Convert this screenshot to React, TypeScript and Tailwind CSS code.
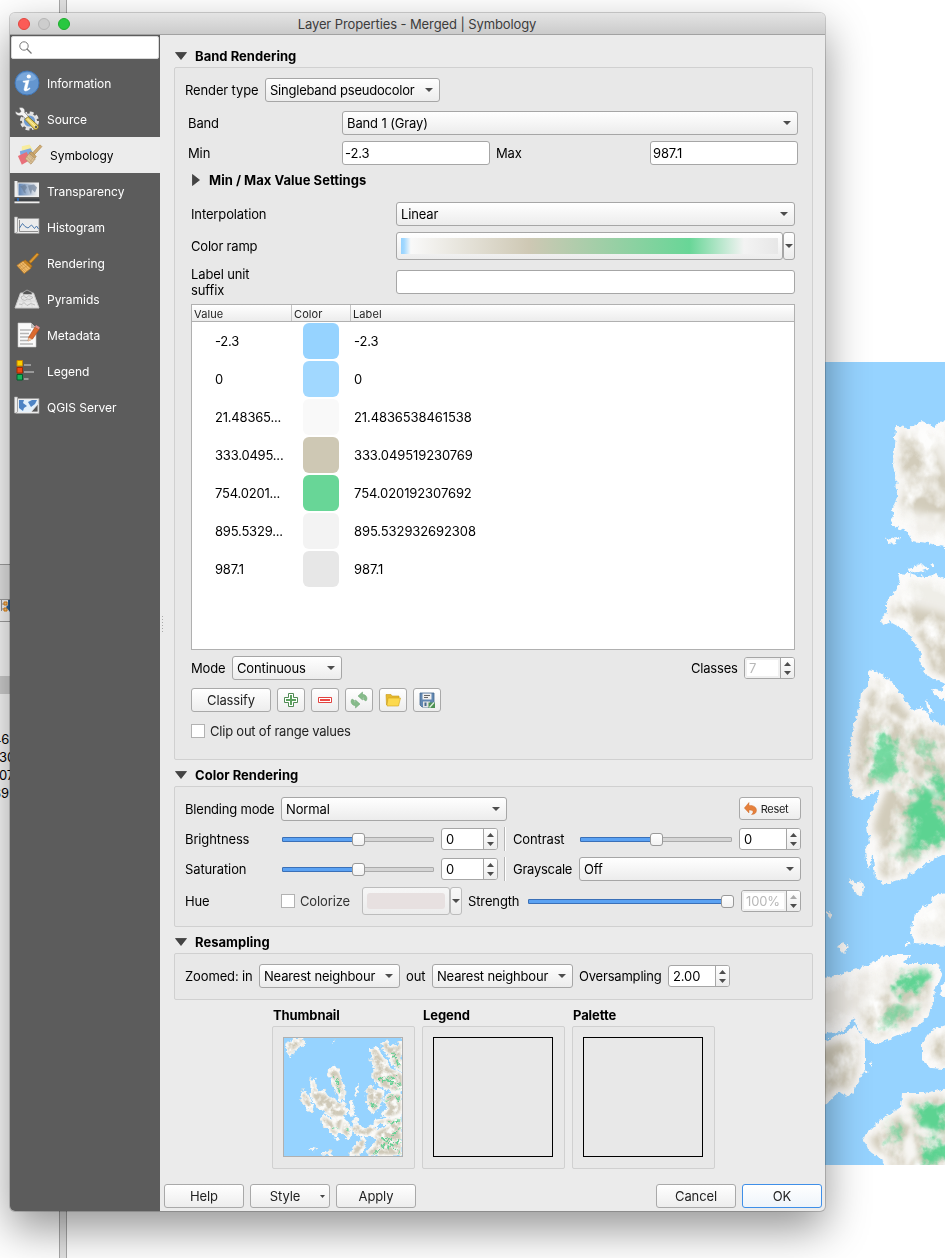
import React from "react";

type Kids = { children?: React.ReactNode };

/* ---------- basic widgets ---------- */

const Down = ({ c = "#4d4d4d" }: { c?: string }) => (
  <svg width="8" height="4" viewBox="0 0 8 4" className="shrink-0"><path d="M0 0h8L4 4z" fill={c} /></svg>
);

const Combo = ({ className = "", children }: Kids & { className?: string }) => (
  <div className={"flex h-6 shrink-0 items-center justify-between rounded-[3px] border border-[#a6a6a6] bg-linear-to-b from-white to-[#ececec] pl-1 pr-[6px] " + className}>
    <span>{children}</span>
    <Down />
  </div>
);

const Field = ({ className = "", children }: Kids & { className?: string }) => (
  <div className={"flex h-6 shrink-0 items-center rounded-[3px] border border-[#a6a6a6] bg-white pl-[2px] " + className}>{children}</div>
);

const Push = ({ className = "", children }: Kids & { className?: string }) => (
  <button className={"flex h-6 shrink-0 items-center justify-center rounded-[3px] border border-[#a9a9a9] bg-linear-to-b from-white to-[#ededed] text-[#222] " + className}>{children}</button>
);

const Spin = ({ className = "", off = false, full = false, children }: Kids & { className?: string; off?: boolean; full?: boolean }) => (
  <div className={"flex h-[22px] shrink-0 rounded-[3px] border border-[#a6a6a6] bg-white " + className}>
    <div className={"flex flex-1 items-center pl-1 " + (off ? "rounded-l-[2px] border-2 border-[#f0f0f0] pl-[2px] text-[#b8b8b8]" : "text-black")}>{children}</div>
    <div className="flex w-[14px] flex-col items-center justify-center gap-[5px] rounded-r-[2px] border-l border-[#a6a6a6] bg-linear-to-b from-white to-[#ececec]">
      <svg width="7" height="4" viewBox="0 0 7 4"><path d="M0 4h7L3.500 0z" fill={full ? "#aaa" : "#4d4d4d"} /></svg>
      <svg width="7" height="4" viewBox="0 0 7 4"><path d="M0 0h7L3.500 4z" fill="#4d4d4d" /></svg>
    </div>
  </div>
);

const Slider = ({ className, fill, knob }: { className: string; fill: string; knob: string }) => (
  <div className={"relative h-[5px] shrink-0 rounded-[1px] border border-[#ababab] bg-[#d5d5d5] " + className}>
    <div className={"absolute -left-px -top-px h-[5px] rounded-[1px] border border-[#3a70b8] bg-[#5ba2f3] " + fill} />
    <div className={"absolute -top-[5px] h-[13px] w-[13px] rounded-[3px] border border-[#999] bg-linear-to-b from-white to-[#f2f2f2] " + knob} />
  </div>
);

const Check = () => <div className="h-[14px] w-[14px] shrink-0 border border-[#b2b2b2] bg-white" />;

const Section = ({ className, children }: Kids & { className: string }) => (
  <div className={"ml-[15px] flex items-center gap-2 text-[13px] font-bold tracking-[0.03px] " + className}>
    <svg width="12" height="8" viewBox="0 0 12 8"><path d="M.5.5h11L6 7.500z" fill="#444" stroke="#222" strokeWidth=".6" /></svg>
    <span>{children}</span>
  </div>
);

const Group = ({ className, children }: Kids & { className: string }) => (
  <div className={"ml-[14px] flex w-[639px] shrink-0 flex-col rounded-[2px] border border-[#d0d0d0] bg-[#e8e8e8] " + className}>{children}</div>
);

/* ---------- sidebar icons ---------- */

const MapFrame = ({ children }: Kids) => (
  <svg width="26" height="26" viewBox="0 -2 26 26">
    <path d="M.5 1h3v16h-3z" fill="#eee" stroke="#aaa" strokeWidth=".6" />
    <path d="M3.500 2.500h21.500v15H2l1.500-2z" fill="#ececec" stroke="#999" strokeWidth=".8" />
    {children}
  </svg>
);

const InfoIcon = () => (
  <svg width="26" height="26" viewBox="0 0 26 26">
    <circle cx="13" cy="13" r="12" fill="#6496cf" stroke="#4176b5" />
    <path d="M2.500 11a10.700 10.700 0 0 1 20-2.500C17 14 8 9 2.500 11z" fill="#8ab4e2" opacity=".6" />
    <circle cx="14.800" cy="6.500" r="2.100" fill="#fff" />
    <path d="M9 11.200l6-.9-2 8.200c-.2 1 .9.700 2.500-.7l.6.700c-2 2.400-6.600 3.800-6 .6l1.600-6.600-2.700-.4z" fill="#fff" stroke="#fff" strokeWidth=".5" />
  </svg>
);

const SourceIcon = () => (
  <svg width="26" height="26" viewBox="0 0 26 26">
    <circle cx="15.500" cy="15" r="8" fill="none" stroke="#e4e4e4" strokeWidth="3" strokeDasharray="3.800 2.480" />
    <circle cx="15.500" cy="15" r="6.600" fill="#6f9bd1" stroke="#e0e0e0" strokeWidth="2" />
    <path d="M5 2c4-1.500 6.500 1 5.700 4.500L15 11l-2.500 2.500L8 9.500C4.500 10.500 1 8.500 1.500 5.500L5 7l2-1.500z" fill="#f4f4f4" stroke="#6b6b6b" strokeWidth=".6" />
    <path d="M11 13.500l3-3 10 9c1.500 2-1.300 5-3.600 3.700z" fill="#ecd66b" stroke="#84701f" strokeWidth=".9" />
    <path d="M13.500 13l8.500 8" stroke="#fff2a8" strokeWidth="1" />
    <circle cx="22" cy="21" r="1.200" fill="#5c5c5c" />
  </svg>
);

const Brush = ({ pale = false }: { pale?: boolean }) => (
  <svg width="27" height="26" viewBox="0 0 27 26">
    {pale && (
      <g>
        <path d="M5 4l8-2 4 6-12 4z" fill="#f7ec9e" />
        <path d="M3 9l11-3 3 6-13 4z" fill="#7fa9e2" />
        <path d="M1 14l9-4 4 8-9 5z" fill="#e8707a" />
      </g>
    )}
    <path d="M15.500 11.500L24 2.500l1.800 1.800-8.300 9z" fill={pale ? "#d2ad72" : "#dd9a33"} stroke={pale ? "#b08c55" : "#a86b14"} strokeWidth=".8" />
    {pale ? (
      <g>
        <path d="M15 9.500l5 5-1.500 2-6-5.500z" fill="#c9a469" stroke="#a07f4c" strokeWidth=".6" />
        <path d="M12.500 11.500L8.500 17l6 5.500 4.500-5.500z" fill="#dcc096" stroke="#ab8d5e" strokeWidth=".7" />
        <path d="M12.500 13.500l5 4.500M10.500 15l5.500 5.500M13 21l4-6" stroke="#b4986c" strokeWidth=".5" fill="none" />
      </g>
    ) : (
      <g>
        <path d="M11.500 9.500l7.500 6.500-1.500 2.500-8-7z" fill="#c98422" stroke="#955c10" strokeWidth=".6" />
        <path d="M9.500 11L3 15.500l7.500 8.500 7-5.500z" fill="#efb866" stroke="#b97922" strokeWidth=".8" />
        <path d="M6 14l7 7.500M8 12.500l7 7M4.500 15.500l7 7M4.500 18l6.500-4.500M7 20.500l7-5" stroke="#ba8137" strokeWidth=".5" fill="none" />
      </g>
    )}
  </svg>
);

const TransparencyIcon = () => (
  <svg width="26" height="26" viewBox="0 -1.500 26 26">
    <defs><linearGradient id="tr"><stop offset="0" stopColor="#6185b4" /><stop offset="1" stopColor="#eee" /></linearGradient></defs>
    <path d="M.5 1.500h3v16h-3z" fill="#eee" />
    <path d="M3.500 3h21.500v14.500h-22z" fill="#eee" />
    <path d="M4.500 4h19v12h-19z" fill="url(#tr)" />
    <path d="M6 7l5-2 2 3-2 3 1 3-2-1-2-4zM14 6l6-1 3 3-2 5-3-3-1 5-2-5z" fill="#687b93" opacity=".65" />
    <path d="M.5 19h25v2.600H.5z" fill="#3f4347" />
    <path d="M.5 22h25v1.800H.5z" fill="#eee" />
    <path d="M3 18.500h2v3H3z" fill="#2d69b3" />
  </svg>
);

const HistogramIcon = () => (
  <MapFrame>
    <path d="M5.500 4v11.500H24" stroke="#777" fill="none" strokeWidth=".8" />
    <path d="M5.500 12l3-4.500 2.500 3 3 1.500 3.500-3 3 3.500 2-2.500 2 3" stroke="#4d7aad" fill="none" />
  </MapFrame>
);

const PyramidsIcon = () => (
  <svg width="26" height="26" viewBox="0 0 26 26">
    <path d="M6.500 7h13l5.500 15H1z" fill="#e7e7e7" stroke="#c9c9c9" />
    <path d="M9 6.500l4-2.500 5 2.500v2H9z" fill="#555" stroke="#ccc" strokeWidth=".6" />
    <path d="M7 11l3-1.500 2 2.500 3-2.500 4 2-3 2-3-.5-2 1.500-3-1zM5 18l3 .5 2-2 3 3 4-2 4 1.500" fill="none" stroke="#b5b5b5" strokeWidth=".9" />
    <path d="M11 8l-3.500 14M15 8l3.500 14M4 15h18" stroke="#d0d0d0" strokeWidth=".6" />
  </svg>
);

const MetadataIcon = () => (
  <svg width="26" height="26" viewBox="0 0 26 26">
    <path d="M4 1h13l5 5v19H4z" fill="#fafafa" stroke="#c7c7c7" strokeWidth=".6" />
    <path d="M17 1v5h5z" fill="#bbb" />
    <path d="M6 8h11M6 11.500h9M6 15h10M6 18.500h8M6 22h13" stroke="#b6b6b6" strokeWidth="1.300" />
    <path d="M14.500 15.500L21 5l4.200 2.400L18.500 17l-4.300 2z" fill="#dc6b2f" stroke="#a74417" strokeWidth=".6" />
    <path d="M14.500 15.500l4 2-4.300 1.800z" fill="#e8ccb0" />
    <path d="M21 5l1-2 3.800 2.200-.8 2.200z" fill="#e58d8a" />
  </svg>
);

const LegendIcon = () => (
  <svg width="26" height="26" viewBox="0 0 26 26">
    <path d="M10 6h7v2h-7zM10 13h10v2H10zM10 20h4.500v2H10z" fill="#999" />
    <path d="M3 2.500h5.500V8H3z" fill="#fbd000" stroke="#c78500" />
    <path d="M3 9.500h5.500V15H3z" fill="#f04a12" stroke="#a32b00" />
    <path d="M3 16.500h5.500V22H3z" fill="#16b45a" stroke="#005f2a" />
  </svg>
);

const ServerIcon = () => (
  <MapFrame>
    <path d="M4.500 4h19v12h-19z" fill="#e4f0fa" />
    <path d="M5 4h5l-1 3 4 3-3 2-1 3-4-3zM14 6l4-2h5l-2 4-4 3z" fill="#4f84c4" />
    <path d="M17 16l7-8v8z" fill="#555" stroke="#eee" strokeWidth=".8" />
  </MapFrame>
);

const items: { name: string; icon: React.ReactNode; on?: boolean }[] = [
  { name: "Information", icon: <InfoIcon /> },
  { name: "Source", icon: <SourceIcon /> },
  { name: "Symbology", icon: <Brush pale />, on: true },
  { name: "Transparency", icon: <TransparencyIcon /> },
  { name: "Histogram", icon: <HistogramIcon /> },
  { name: "Rendering", icon: <Brush /> },
  { name: "Pyramids", icon: <PyramidsIcon /> },
  { name: "Metadata", icon: <MetadataIcon /> },
  { name: "Legend", icon: <LegendIcon /> },
  { name: "QGIS Server", icon: <ServerIcon /> },
];

/* ---------- maps ---------- */

const coast = [
  "M70 64L74 64 85 66 97 59 104 62 110 65 114 60 132 58V188L103 181 87 179 83 170 65 163 66 157 69 153 67 148 72 135 71 111 68 101 69 85z",
  "M59 176l4 2 3-2 8-1-3 6-7 1z",
  "M83 206l14-4 6 5-9 3-8 1z",
  "M106 204l3-2v5z",
  "M73 211l10 1 17 3 10-3 22 12V326l-29-11-6-9-3-8 3-7-10-13-7-10-15-8-7 3-2-7 6-5v-11l13-19z",
  "M107 327l8 2 7-6v18l-14-10z",
  "M101 338l8 10-4 4-3-5z",
  "M53 310l9 6 8 7 10 15 8 10 9-3 10 13 25 12V486l-25 12-7 5-20 13-22 7-8-8-2-20-6-30 5-17 8-20-18 9-9-2-2-10-3-17 4-37 8-30 1-11 7-5v-17z",
  "M40 488l3-7 6-2-2 14-3 15-3-10z",
  "M24 516l7 6 4-4 4 8-1 8-8-3z",
  "M2 549l6 4-4 4z",
  "M13 585l5-5 6 5-6 6z",
  "M132 530l-24 3-1 7-17 11-5 19 5 11 42 4z",
  "M-14 619l34-8 23-8 19-10 25 0-9 8 35 0 4 10-7 17-1 8-6 19-16 13-17 7-20 8-12-8-6-12-4-8-8 13-34 6z",
  "M-14 684l34-13 10-8 10 15v27l-7 16-8 14-12-5-27 29z",
  "M132 659l-25 9-10 13v17l8 8 27 2z",
  "M122 619l-6 5-2 8 8 3z",
  "M44 700l4 1v4zM39 708l5 2-4 2zM81 579l5 3-5 2z",
  "M132 724l-32 7-23 0-1 14-21 13-17 17 5 13 17 13 0 12h72z",
].join("");

const Terrain = () => (
  <svg className="absolute left-[825px] top-[362px]" width="120" height="803" viewBox="0 0 120 803">
    <defs>
      <filter id="rough" x="-5%" y="-5%" width="110%" height="110%">
        <feTurbulence type="fractalNoise" baseFrequency=".22" numOctaves="3" seed="4" />
        <feDisplacementMap in="SourceGraphic" scale="6" xChannelSelector="R" yChannelSelector="G" />
      </filter>
      <filter id="soft" x="-20%" y="-5%" width="140%" height="110%">
        <feTurbulence type="fractalNoise" baseFrequency=".07" numOctaves="3" seed="8" result="n" />
        <feDisplacementMap in="SourceGraphic" in2="n" scale="26" xChannelSelector="R" yChannelSelector="G" />
        <feGaussianBlur stdDeviation="2.200" />
      </filter>
      <filter id="green" x="-20%" y="-5%" width="140%" height="110%">
        <feTurbulence type="fractalNoise" baseFrequency=".09" numOctaves="3" seed="5" result="n" />
        <feGaussianBlur in="SourceGraphic" stdDeviation="3.500" result="b" />
        <feDisplacementMap in="b" in2="n" scale="26" xChannelSelector="R" yChannelSelector="G" />
        <feGaussianBlur stdDeviation=".7" />
      </filter>
      <filter id="wide" x="-20%" y="-5%" width="140%" height="110%"><feGaussianBlur stdDeviation="4.500" /></filter>
      <filter id="relief" x="0" y="0" width="100%" height="100%">
        <feTurbulence type="fractalNoise" baseFrequency=".045 .035" numOctaves="4" seed="12" />
        <feColorMatrix values="0 0 0 0 .98  0 0 0 0 .98  0 0 0 0 .97  2.600 0 0 0 -1" />
      </filter>
      <mask id="land"><path d={coast} fill="#fff" filter="url(#rough)" /></mask>
    </defs>
    <rect width="120" height="803" fill="#96d3ff" />
    <g mask="url(#land)">
      <rect width="120" height="803" fill="#d2ccbb" />
      <g fill="#f4f3f0" filter="url(#wide)">
        <path d="M90 56l40-6v70l-18-22zM60 140l70 20v40H60z" opacity=".9" />
        <path d="M60 200h80v60l-30-10-40-10z" opacity=".85" />
        <path d="M-10 600l60-10 30-6v34l-30 18-30 40h-30z" opacity=".75" />
        <path d="M80 520h50v70H80z" opacity=".8" />
      </g>
      <rect width="120" height="803" filter="url(#relief)" />
      <g fill="#5cd391" filter="url(#green)">
        <path d="M52 370l14 4 10 30-10 20-12-8-8 12z" opacity=".85" />
        <path d="M88 376l8 12 14 18-6-26z" opacity=".6" />
        <path d="M92 424l16 4 4 22 14 10-6 24-20-2-12 10v-24l-6-20z" />
        <path d="M72 466l16 4 4 26-18 2z" opacity=".45" />
        <path d="M104 410l18 8v24l-12-4z" />
        <path d="M72 618l26-12 8 6-14 16-20 4z" />
        <path d="M52 666l16-22 16-2-10 18-16 8zM76 646l14-3-4 10z" opacity=".7" />
        <path d="M86 738l14 8 22-8v26l-18 14-12-20z" />
        <path d="M64 766l8-12 8 16-6 16z" opacity=".7" />
        <path d="M94 790l20-10 12 2v16l-30 4z" />
      </g>
      <g stroke="#f7f6f3" fill="none" filter="url(#soft)">
        <path d="M84 66l24 38 14 14M72 112l24 6 26 16M68 152l26 6 28-4M66 250l34 18 22 10" strokeWidth="2.500" />
        <path d="M54 428l14-10 14-14 18 12 14 24M58 424l16 4 14 6M55 500l14-10 8-24M50 320l12 30 20 14 16 16" strokeWidth="3.500" />
        <path d="M30 618l30 14 24 10 26-4M44 604l10 28" strokeWidth="3.500" />
        <path d="M78 742l10 24 34 12M86 768l-2 34" strokeWidth="6" />
      </g>
      <path d={coast} fill="none" stroke="#fbfaf9" strokeWidth="10" filter="url(#wide)" />
      <path d={coast} fill="none" stroke="#fbfaf9" strokeWidth="4" filter="url(#wide)" />
    </g>
  </svg>
);

const thumbCoast =
  "M80 130l15-15 35-2 5 15-20 12-15 15-10 18-12-18zM332 145l22-3 12 25 20 20 5 15 20 8 20 12V275l-30 5-10-10-30-10-25-25 0-15 10-15-12-20zM365 125l20-3 8 15 20-5 14-15V215l-25-15-15-30-15-20z" +
  "M205 210l15-12 15 10 10 25 10 35-3 35-15-5-10-30-15-30-8-15zM152 235l12 10 2 15 12 15 15-5 10 15 25 15 30 15 2 20-10 25-8 35-15-5-5-30-25-20-20-15-20-25-5-20z" +
  "M120 285l12-15 12 15 15 30-2 20-12-3-15-22zM270 305l8-5 2 25 5 20-15 0zM285 285l5-20 5-10-3 25-8 15zM180 350l15-5 18 15 15-8 25 0 10 20 12 20-10 30-10-15-15-10-10 10-15-5-15-20-12-10z" +
  "M318 260l18-5 12 12 25 5-5 35-25 35-18-15-5-20zM378 282l49-14V350l-30 5-30-10 15-20-10-20zM345 360l50-8 32-12V468H325l-3-15 20-20 5-15-15-15 35-20 25-10-50 0zM275 375l20-5 15 15 25-10 20 5-10 20-20 10-25-2-20-8-10-10zM278 355l15-2 5 12-15 5z" +
  "M295 425l12-15 12 8-5 25-15 20-30 5 5-20zM183 465l12-12 20 3 8 12zM146 448l12-3 15 3-12 4zM218 123h4v5h-4zM165 233h3v4h-3zM222 415l12-3 6 6-12 4z";

const Thumbnail = () => (
  <svg width="118" height="118" viewBox="71 113 356 355" preserveAspectRatio="none">
    <defs>
      <filter id="tr1" x="-5%" y="-5%" width="110%" height="110%">
        <feTurbulence type="fractalNoise" baseFrequency=".07" numOctaves="3" seed="3" />
        <feDisplacementMap in="SourceGraphic" scale="20" xChannelSelector="R" yChannelSelector="G" />
      </filter>
      <filter id="tr2"><feTurbulence type="fractalNoise" baseFrequency=".12" numOctaves="2" seed="9" result="n" /><feDisplacementMap in="SourceGraphic" in2="n" scale="26" xChannelSelector="R" yChannelSelector="G" /><feGaussianBlur stdDeviation="1.500" /></filter>
      <filter id="tb"><feGaussianBlur stdDeviation="3" /></filter>
      <filter id="tn" x="0" y="0" width="100%" height="100%">
        <feTurbulence type="fractalNoise" baseFrequency=".06" numOctaves="3" seed="21" />
        <feColorMatrix values="0 0 0 0 .96  0 0 0 0 .96  0 0 0 0 .94  3 0 0 0 -1.200" />
      </filter>
      <mask id="tland"><path d={thumbCoast} fill="#fff" stroke="#fff" strokeWidth="3" filter="url(#tr1)" /></mask>
    </defs>
    <rect x="71" y="113" width="356" height="355" fill="#96d3ff" />
    <g mask="url(#tland)">
      <rect x="71" y="113" width="356" height="355" fill="#cfc9b8" />
      <rect x="71" y="113" width="356" height="355" filter="url(#tn)" />
      <g stroke="#66d095" strokeWidth="6" strokeLinecap="round" strokeDasharray="14 12" fill="none" filter="url(#tr2)">
        <path d="M400 160l25 50M228 235l12 50M222 380l16 10M262 385l4 12M360 235l65 20M335 310l25 10M375 300l50-35M390 370l40-15M345 460l80-80M370 415l55 45M385 440l40-20M410 290l15 20M370 240l50-10" />
      </g>
      <path d={thumbCoast} fill="none" stroke="#fbfaf8" strokeWidth="9" filter="url(#tb)" />
    </g>
  </svg>
);

/* ---------- toolbar icons ---------- */

const toolIcons: React.ReactNode[] = [
  <svg width="16" height="16" viewBox="0 0 16 16"><path d="M5.500 1.500h5v4h4v5h-4v4h-5v-4h-4v-5h4z" fill="#fff" stroke="#4f8a53" /><path d="M7 3h2v4h4v2H9v4H7V9H3V7h4z" fill="#5aa05d" /></svg>,
  <svg width="16" height="16" viewBox="0 0 16 16"><path d="M1.500 5.500h13v5h-13z" fill="#fff" stroke="#e2433f" /><path d="M3 7h10v2H3z" fill="#ec4a46" /></svg>,
  <svg width="18" height="18" viewBox="0 0 18 18"><path d="M8 5l4.500-4v2.300c3 .2 4.500 2.200 4.500 4.700l-1 2-2.500-1.500c.3-1.500 0-2-1-2.200V9z" fill="#86bb8a" stroke="#6ba570" strokeWidth=".5" /><path d="M10 13l-4.500 4v-2.300C2.500 14.500 1 12.500 1 10l1-2 2.500 1.500c-.3 1.500 0 2 1 2.200V9z" fill="#86bb8a" stroke="#6ba570" strokeWidth=".5" /></svg>,
  <svg width="16" height="16" viewBox="0 0 16 16"><path d="M1 2.500h5l1 1.500h7v3H3.500L1.500 13z" fill="#e6b92e" stroke="#c79a1a" strokeWidth=".6" /><path d="M3 6h12.500l-2 8H2z" fill="#fcd94e" stroke="#d0a21c" strokeWidth=".6" /></svg>,
  <svg width="16" height="16" viewBox="0 0 16 16"><path d="M1 1h14v14H3l-2-2z" fill="#6288b3" stroke="#47698f" strokeWidth=".8" /><path d="M3.500 1.500h9v6h-9z" fill="#eee" /><path d="M5 3.500h6M5 5.500h4" stroke="#666" /><path d="M4 9.500h7V15H4z" fill="#e4e4e4" /><path d="M5.500 10.500h2V14h-2z" fill="#47698f" /><path d="M9.500 10.500H16V16H9.500z" fill="#4d9153" /><path d="M10.500 15.500l4.500-5" stroke="#dff0df" strokeWidth="1.300" /></svg>,
];

const stops: [string, string, string][] = [
  ["-2.3", "-2.3", "bg-[#96d3ff]"],
  ["0", "0", "bg-[#a1d8ff]"],
  ["21.48365...", "21.4836538461538", "bg-[#f9f9f9]"],
  ["333.0495...", "333.049519230769", "bg-[#cec8b4]"],
  ["754.0201...", "754.020192307692", "bg-[#68d697]"],
  ["895.5329...", "895.532932692308", "bg-[#f3f3f3]"],
  ["987.1", "987.1", "bg-[#e7e7e7]"],
];

const Backdrop = () => (
  <>
    <div className="absolute left-[59px] top-0 h-[1258px] w-2 border-x border-[#a8a8a8] bg-[#e2e2e2]" />
    <div className="absolute left-0 top-[564px] h-9 w-[10px] border-y border-[#a4a4a4] bg-[#eaeaea]" />
    <div className="absolute left-0 top-[600px] h-[22px] w-[10px] border-b border-[#a4a4a4]">
      <svg width="10" height="14" viewBox="0 0 10 14"><path d="M1.500 0v11M1.500 4h3M1.500 9h3" stroke="#999" /><path d="M4 2h3v3H4zM4 8h3v3H4z" fill="#ffd089" stroke="#e8830c" /><path d="M8 0h2v12L6 7l2-2z" fill="#30679c" /></svg>
    </div>
    <div className="absolute left-0 top-[676px] h-[18px] w-[10px] bg-[#d4d4d4]" />
    <div className="absolute left-0 top-[730px] flex w-[10px] flex-col overflow-hidden text-[13px] leading-[18px]">
      <span className="-ml-[7px]">46</span>
      <span className="-ml-px">30</span>
      <span className="-ml-px">07</span>
      <span className="-ml-[7px]">69</span>
    </div>
    <Terrain />
  </>
);

export default function App() {
  return (
    <div className="relative h-[1258px] w-[945px] overflow-hidden bg-white font-['Inter','Liberation_Sans',sans-serif] text-[13px] leading-4 tracking-[-0.13px] text-black">
      <Backdrop />

      <div className="absolute left-[10px] top-[13px] flex h-[1198px] w-[815px] flex-col overflow-hidden rounded-[5px] bg-[#ebebeb] shadow-[0_0_0_1px_rgba(0,0,0,0.18),0_18px_44px_rgba(0,0,0,0.42)]">
        {/* title bar */}
        <div className="relative flex h-[22px] shrink-0 items-center justify-center border-b border-[#a2a2a2] bg-linear-to-b from-[#e4e4e4] to-[#cbcbcb] text-[#3c3c3c]">
          <div className="absolute left-2 top-[5px] flex gap-2">
            <div className="h-3 w-3 rounded-full border border-[#e2463f] bg-[#fc5b57]" />
            <div className="h-3 w-3 rounded-full border border-[#b5b5b5] bg-[#cdcdcd]" />
            <div className="h-3 w-3 rounded-full border border-[#1dad2b] bg-[#28c840]" />
          </div>
          <span className="pr-px tracking-[-0.1px]">Layer Properties - Merged | Symbology</span>
        </div>

        <div className="flex flex-1">
          {/* sidebar */}
          <div className="flex w-[150px] shrink-0 flex-col bg-[#5c5c5c]">
            <div className="ml-px mt-px flex h-[23px] w-[148px] items-center rounded-[2px] border border-[#d8d8d8] bg-white pl-[7px]">
              <svg width="13" height="13" viewBox="0 0 13 13"><circle cx="5" cy="5" r="4.200" fill="none" stroke="#777" /><path d="M8 8l4.500 4.500" stroke="#777" strokeWidth="1.300" /></svg>
            </div>
            <div className="mt-[6px] flex flex-col">
              {items.map((it) => (
                <div key={it.name} className={"flex h-9 items-center text-[12px] tracking-[-0.03px] " + (it.on ? "bg-[#ececec] pl-[7px] text-black" : "pl-1 text-white")}>
                  <div className="flex w-[26px] justify-center">{it.icon}</div>
                  <span className="ml-[7px] pt-px">{it.name}</span>
                </div>
              ))}
            </div>
          </div>

          {/* main pane */}
          <div className="relative flex flex-1 flex-col">
            <svg className="absolute left-[1px] top-[580px]" width="3" height="18" viewBox="0 0 3 18"><path d="M1.500 1v17" stroke="#aaa" strokeDasharray="1 2" /></svg>

            <Section className="mt-[11px] h-[21px] pb-px">Band Rendering</Section>
            <Group className="h-[693px]">
              <div className="ml-[10px] mt-[10px] flex h-6 items-center">
                <span className="w-20">Render type</span>
                <Combo className="w-[175px] tracking-[-0.23px]">Singleband pseudocolor</Combo>
              </div>
              <div className="ml-[13px] mt-[9px] flex h-6 items-center">
                <span className="w-[154px]">Band</span>
                <Combo className="w-[456px]">Band 1 (Gray)</Combo>
              </div>
              <div className="ml-[13px] mt-[6px] flex h-6 items-center">
                <span className="w-[154px]">Min</span>
                <Field className="w-[148px]">-2.3</Field>
                <span className="ml-[6px] w-[154px]">Max</span>
                <Field className="w-[148px]">987.1</Field>
              </div>
              <div className="ml-[17px] mt-[5px] flex h-5 items-center gap-[9px] font-bold tracking-[0.03px]">
                <svg width="8" height="12" viewBox="0 0 8 12"><path d="M.5.5v11L7.500 6z" fill="#444" stroke="#222" strokeWidth=".6" /></svg>
                <span>Min / Max Value Settings</span>
              </div>
              <div className="ml-4 mt-3 flex h-6 items-center">
                <span className="w-[205px]">Interpolation</span>
                <Combo className="w-[399px]">Linear</Combo>
              </div>
              <div className="ml-4 mt-[6px] flex h-7 items-center">
                <span className="w-[205px] tracking-[-0.2px]">Color ramp</span>
                <div className="flex h-7 w-[387px] items-center justify-center rounded-[3px] border border-[#a6a6a6] bg-linear-to-b from-white to-[#ececec]">
                  <div className="h-4 w-[377px] bg-[linear-gradient(90deg,#96d3ff_0%,#a1d8ff_0.8%,#f9f9f9_2.6%,#cec8b4_34%,#68d697_76.500%,#f3f3f3_91%,#e7e7e7_100%)]" />
                </div>
                <div className="flex h-7 w-3 items-center justify-center rounded-[3px] border border-[#a6a6a6] bg-linear-to-b from-white to-[#ececec]"><Down /></div>
              </div>
              <div className="ml-4 mt-[6px] flex h-[33px] items-start">
                <span className="w-[205px]">Label unit<br />suffix</span>
                <Field className="mt-1 w-[399px]" />
              </div>

              <div className="ml-4 mt-[5px] flex h-[346px] w-[604px] flex-col border border-[#b0b0b0] bg-white">
                <div className="flex h-[17px] shrink-0 items-center border-b border-[#b0b0b0] bg-linear-to-b from-white to-[#ececec] text-[11px] tracking-[0.1px] text-[#222]">
                  <div className="flex h-full w-[100px] items-center border-r border-[#c4c4c4] pl-[2px] pt-px">Value</div>
                  <div className="flex h-full w-[59px] items-center border-r border-[#c4c4c4] pl-[2px] pt-px">Color</div>
                  <div className="flex h-full items-center pl-[2px] pt-px">Label</div>
                </div>
                {stops.map(([v, l, c]) => (
                  <div key={v} className="flex h-[38px] shrink-0 items-center">
                    <span className="w-[88px] pl-[23px] tracking-[-0.2px]">{v}</span>
                    <div className="ml-[23px] w-[51px]"><div className={"h-9 w-9 rounded-[6px] " + c} /></div>
                    <span className="tracking-[-0.1px]">{l}</span>
                  </div>
                ))}
              </div>

              <div className="ml-4 mr-[17px] mt-[6px] flex h-6 items-center">
                <span className="w-[41px]">Mode</span>
                <Combo className="w-[110px]">Continuous</Combo>
                <span className="ml-auto w-[53px] tracking-[-0.2px]">Classes</span>
                <Spin className="w-[51px]" off>7</Spin>
              </div>
              <div className="ml-4 mt-2 flex h-6 gap-[6px]">
                <Push className="w-20">Classify</Push>
                {toolIcons.map((ic, i) => <Push key={i} className="w-7">{ic}</Push>)}
              </div>
              <div className="ml-4 mt-3 flex h-[14px] items-center gap-[5px] text-[#222]">
                <Check /><span className="tracking-[-0.22px]">Clip out of range values</span>
              </div>
            </Group>

            <Section className="h-[26px] pt-1">Color Rendering</Section>
            <Group className="h-[141px] pl-[10px] pr-[11px]">
              <div className="mt-[10px] flex h-6 items-center">
                <span className="w-24 tracking-[-0.2px]">Blending mode</span>
                <Combo className="w-[226px]">Normal</Combo>
                <Push className="ml-auto h-[23px]! w-[62px] gap-1 self-start pr-2 text-[11px]">
                  <svg width="13" height="13" viewBox="0 0 13 13"><path d="M5 .5v3c5-.5 7.500 2 7.500 5-.2 2.500-2 4-5 4 2.300-1.700 2.800-4.700-2.500-4.500v3L.3 6z" fill="#e5803c" stroke="#c96524" strokeWidth=".4" /></svg>
                  <span className="tracking-[-0.3px]">Reset</span>
                </Push>
              </div>
              <div className="mt-[6px] flex h-6 items-center">
                <span className="w-[97px]">Brightness</span>
                <Slider className="w-[152px]" fill="w-[76px]" knob="left-[69px]" />
                <Spin className="ml-[7px] w-[57px]">0</Spin>
                <div className="ml-[6px] h-6 w-[2px] border-l border-[#b5b5b5] bg-white" />
                <span className="ml-[7px] w-[67px]">Contrast</span>
                <Slider className="w-[152px]" fill="w-[76px]" knob="left-[69px]" />
                <Spin className="ml-[7px] w-[62px]">0</Spin>
              </div>
              <div className="mt-[6px] flex h-6 items-center">
                <span className="w-[97px]">Saturation</span>
                <Slider className="w-[152px]" fill="w-[76px]" knob="left-[69px]" />
                <Spin className="ml-[7px] w-[57px]">0</Spin>
                <div className="ml-[6px] h-6 w-[2px] border-l border-[#b5b5b5] bg-white" />
                <span className="ml-[7px] w-[66px] tracking-[-0.25px]">Grayscale</span>
                <Combo className="w-[222px]">Off</Combo>
              </div>
              <div className="mt-[6px] flex h-7 items-center">
                <span className="w-24">Hue</span>
                <Check />
                <span className="ml-[5px] w-[62px] text-[#333]">Colorize</span>
                <div className="flex h-7 w-[88px] items-center justify-center rounded-[3px] border border-[#bcbcbc] bg-linear-to-b from-[#f6f6f6] to-[#ececec]">
                  <div className="h-4 w-[78px] rounded-[3px] bg-[#e7e0e0]" />
                </div>
                <div className="flex h-7 w-3 items-center justify-center rounded-[3px] border border-[#bcbcbc] bg-linear-to-b from-[#f8f8f8] to-[#ececec]"><Down /></div>
                <span className="ml-[6px] w-[60px]">Strength</span>
                <Slider className="w-[206px]" fill="w-[200px]" knob="left-[192px]" />
                <Spin className="ml-[7px] w-[60px]" off full>100%</Spin>
              </div>
            </Group>

            <Section className="h-[26px] pt-1">Resampling</Section>
            <Group className="h-[47px]">
              <div className="ml-[10px] mt-[10px] flex h-6 items-center">
                <span className="w-[74px]">Zoomed: in</span>
                <Combo className="w-[141px] tracking-[-0.18px]">Nearest neighbour</Combo>
                <span className="ml-[6px] w-[26px]">out</span>
                <Combo className="w-[141px] tracking-[-0.18px]">Nearest neighbour</Combo>
                <span className="ml-[6px] w-[89px] tracking-[-0.2px]">Oversampling</span>
                <Spin className="w-[62px]">2.00</Spin>
              </div>
            </Group>

            <div className="ml-28 mt-[5px] flex gap-[7px]">
              {["Thumbnail", "Legend", "Palette"].map((n, i) => (
                <div key={n} className="flex w-[143px] flex-col">
                  <span className="flex h-[21px] items-center pb-px pl-px font-bold tracking-[-0.1px]">{n}</span>
                  <div className="flex h-[143px] items-center justify-center rounded-[2px] border border-[#d0d0d0] bg-[#e8e8e8] pb-px pr-px">
                    <div className={"h-[120px] w-[120px] border " + (i === 0 ? "border-[#b0b0b0]" : "border-black")}>{i === 0 && <Thumbnail />}</div>
                  </div>
                </div>
              ))}
            </div>

            <div className="ml-1 mt-[15px] flex h-6 w-[658px] gap-[6px]">
              <Push className="w-20">Help</Push>
              <Push className="w-20"><span className="ml-[11px] w-[38px]">Style</span><span className="ml-4"><svg width="5" height="3" viewBox="0 0 5 3"><path d="M0 0h5L2.500 3z" fill="#444" /></svg></span></Push>
              <Push className="w-20">Apply</Push>
              <Push className="ml-auto w-20">Cancel</Push>
              <Push className="w-20 border-[#3f8fe8]! to-[#eef4fb]!">OK</Push>
            </div>
          </div>
        </div>
      </div>
    </div>
  );
}
